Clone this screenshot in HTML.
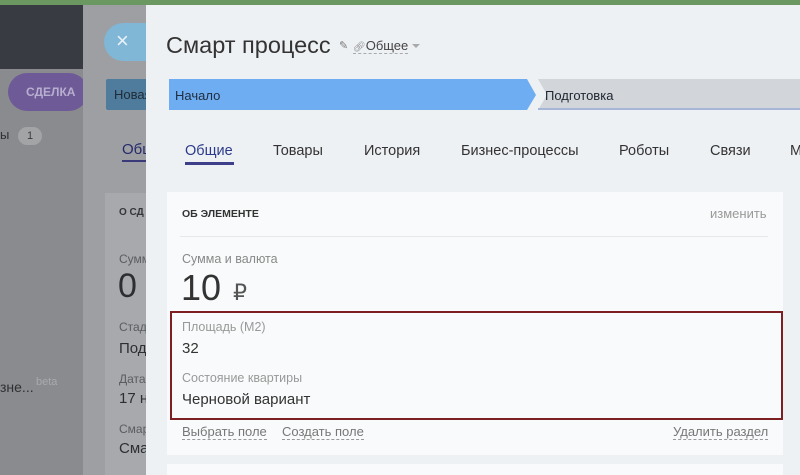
<!DOCTYPE html>
<html><head><meta charset="utf-8"><style>
*{margin:0;padding:0;box-sizing:border-box}
body{width:800px;height:475px;overflow:hidden;position:relative;background:#eef1f4;font-family:"Liberation Sans","DejaVu Sans",sans-serif}
.a{position:absolute}
</style></head><body>
<div class="a" style="left:0;top:0;width:800px;height:5px;background:#6b9760"></div>
<div class="a" style="left:0;top:5px;width:83px;height:470px;background:#8a8b8e"></div>
<div class="a" style="left:0;top:5px;width:83px;height:64px;background:#393b42"></div>
<div class="a" style="left:8px;top:73px;width:80px;height:38px;border-radius:19px;background:#6e5a96;color:#b7aed0;font-size:12px;font-weight:bold;line-height:38px;padding-left:18px">СДЕЛКА</div>
<div class="a" style="left:0;top:127px;font-size:13px;color:#2f3033">ы</div>
<div class="a" style="left:18px;top:127px;width:24px;height:18px;border-radius:9px;background:#a3a4a6;font-size:11px;color:#3a3b3d;text-align:center;line-height:18px">1</div>
<div class="a" style="left:0;top:379px;font-size:14px;color:#2f3033">зне...</div>
<div class="a" style="left:36px;top:376px;font-size:11px;color:#a9aaac">beta</div>
<div class="a" style="left:83px;top:5px;width:63px;height:470px;background:#9d9fa2"></div>
<div class="a" style="left:104px;top:23px;width:60px;height:38px;border-radius:19px;background:#80b6d6"></div>
<div class="a" style="left:116px;top:28px;font-size:22px;color:#e8f2f8">×</div>
<div class="a" style="left:106px;top:79px;width:50px;height:31px;border-radius:2px;background:#4f7c9c;color:#1e2a36;font-size:13px;line-height:31px;padding-left:8px">Новая</div>
<div class="a" style="left:122px;top:141px;font-size:15px;color:#252a6a">Общ</div>
<div class="a" style="left:122px;top:160px;width:30px;height:2px;background:#3a3a7a"></div>
<div class="a" style="left:105px;top:193px;width:50px;height:282px;background:#a7a9ac"></div>
<div class="a" style="left:119px;top:207px;font-size:10px;font-weight:bold;color:#34363a">О СД</div>
<div class="a" style="left:119px;top:252px;font-size:12px;color:#5a5c60">Сумм</div>
<div class="a" style="left:118px;top:267px;font-size:34px;color:#2c2e32">0</div>
<div class="a" style="left:119px;top:320px;font-size:12px;color:#5a5c60">Стад</div>
<div class="a" style="left:119px;top:340px;font-size:15px;color:#2c2e32">Под</div>
<div class="a" style="left:119px;top:372px;font-size:12px;color:#5a5c60">Дата</div>
<div class="a" style="left:119px;top:390px;font-size:15px;color:#2c2e32">17 н</div>
<div class="a" style="left:119px;top:422px;font-size:12px;color:#5a5c60">Смар</div>
<div class="a" style="left:119px;top:440px;font-size:15px;color:#2c2e32">Сма</div>

<div class="a" style="left:146px;top:5px;width:654px;height:470px;background:#eef1f4"></div>
<div class="a" style="left:166px;top:32px;font-size:23.5px;color:#333">Смарт процесс</div>
<div class="a" style="left:339px;top:39px;font-size:11px;color:#777">✎</div>
<div class="a" style="left:353px;top:38px;font-size:13px;color:#444;border-bottom:1px dashed #aaa"><span style="font-size:10px;color:#888">🔗︎</span>Общее</div>
<div class="a" style="left:412px;top:44px;width:0;height:0;border-left:4px solid transparent;border-right:4px solid transparent;border-top:4px solid #aaa"></div>

<svg class="a" style="left:167px;top:79px" width="633" height="32"><path d="M2 0H360L369 16L360 31H2Z" fill="#6fadf2"/><path d="M371 0H633V31H371L380 16Z" fill="#d2d5d9"/><path d="M371 30H633" stroke="#a5b6d6" stroke-width="2"/></svg>
<div class="a" style="left:175px;top:88px;font-size:13px;color:#1e2c3d">Начало</div>
<div class="a" style="left:545px;top:88px;font-size:13px;color:#1e2530">Подготовка</div>

<div class="a" style="left:185px;top:143px;font-size:14.5px;color:#2b3a8a">Общие</div>
<div class="a" style="left:185px;top:162px;width:49px;height:3px;background:#3e3f8a"></div>
<div class="a" style="left:273px;top:143px;font-size:14.5px;color:#333">Товары</div>
<div class="a" style="left:364px;top:143px;font-size:14.5px;color:#333">История</div>
<div class="a" style="left:461px;top:143px;font-size:14.5px;color:#333">Бизнес-процессы</div>
<div class="a" style="left:619px;top:143px;font-size:14.5px;color:#333">Роботы</div>
<div class="a" style="left:710px;top:143px;font-size:14.5px;color:#333">Связи</div>
<div class="a" style="left:790px;top:143px;font-size:14.5px;color:#333">М</div>

<div class="a" style="left:167px;top:192px;width:616px;height:263px;background:#f9fafb"></div>
<div class="a" style="left:167px;top:464px;width:616px;height:11px;background:#f9fafb"></div>
<div class="a" style="left:182px;top:208px;font-size:10.5px;font-weight:bold;color:#333">ОБ ЭЛЕМЕНТЕ</div>
<div class="a" style="left:710px;top:206px;font-size:13px;color:#999">изменить</div>
<div class="a" style="left:180px;top:236px;width:588px;height:1px;background:#e6e8ea"></div>
<div class="a" style="left:182px;top:252px;font-size:12.5px;color:#888">Сумма и валюта</div>
<div class="a" style="left:181px;top:267px;font-size:36px;color:#333">10</div>
<div class="a" style="left:233px;top:280px;font-size:22px;color:#555">₽</div>
<div class="a" style="left:170px;top:311px;width:613px;height:109px;border:2px solid #7d1f22"></div>
<div class="a" style="left:182px;top:320px;font-size:12.5px;color:#999">Площадь (М2)</div>
<div class="a" style="left:182px;top:340px;font-size:15px;color:#333">32</div>
<div class="a" style="left:182px;top:371px;font-size:12.5px;color:#999">Состояние квартиры</div>
<div class="a" style="left:182px;top:391px;font-size:15px;color:#333">Черновой вариант</div>
<div class="a" style="left:182px;top:424px;font-size:13px;color:#777;border-bottom:1px dashed #999">Выбрать поле</div>
<div class="a" style="left:282px;top:424px;font-size:13px;color:#777;border-bottom:1px dashed #999">Создать поле</div>
<div class="a" style="left:673px;top:424px;font-size:13px;color:#777;border-bottom:1px dashed #999">Удалить раздел</div>
</body></html>
